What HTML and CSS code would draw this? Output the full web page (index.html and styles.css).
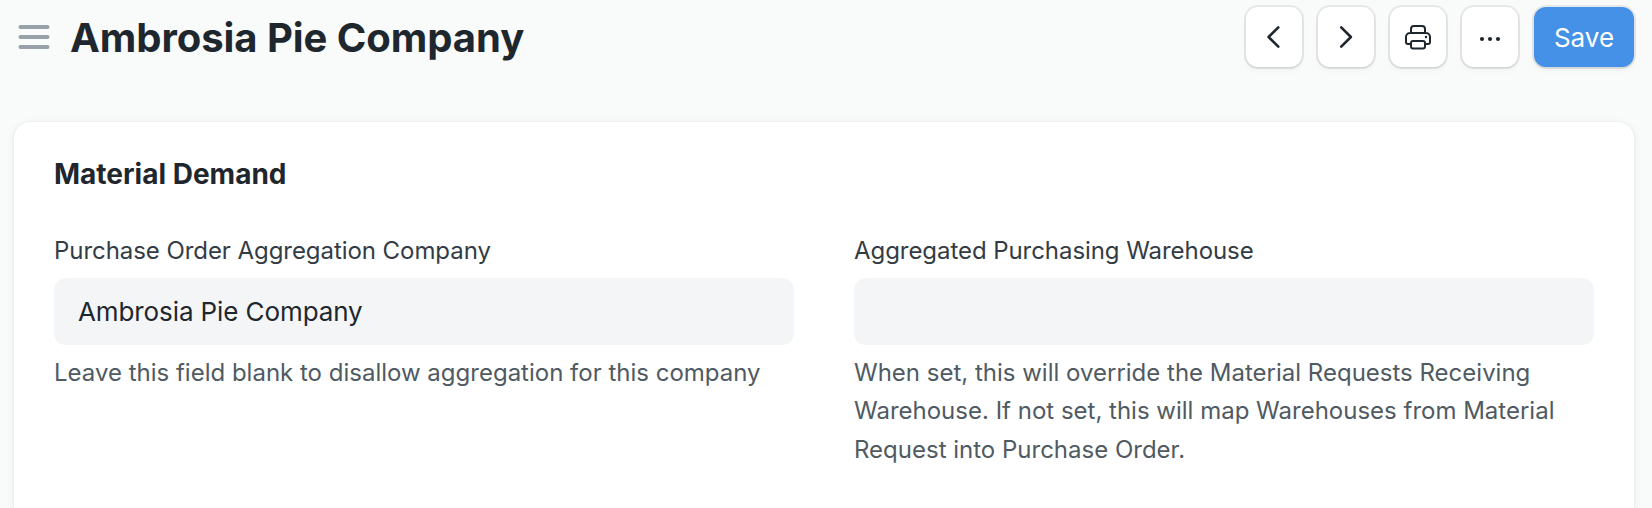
FILE: index.html
```html
<!DOCTYPE html>
<html lang="en">
<head>
<meta charset="utf-8">
<title>Ambrosia Pie Company</title>
<link rel="stylesheet" href="styles.css">
</head>
<body>
<header class="page-head">
  <svg class="menu-icon" viewBox="0 0 32 26"><path d="M2.500 3h27M2.500 13h27M2.500 23h27"/></svg>
  <h1 class="title">Ambrosia Pie Company</h1>
  <div class="actions">
    <button class="btn" aria-label="Previous"><svg class="icon" viewBox="0 0 32 32"><path d="M20.300 6.300 10.600 16l9.700 9.700"/></svg></button>
    <button class="btn" aria-label="Next"><svg class="icon" viewBox="0 0 32 32"><path d="m11.200 6.300 9.700 9.700-9.700 9.700"/></svg></button>
    <button class="btn" aria-label="Print"><svg class="icon icon-print" viewBox="0 0 32 32"><path d="M9 12V8a3 3 0 0 1 3-3h8a3 3 0 0 1 3 3v4M9 23H6a2 2 0 0 1-2-2v-5a4 4 0 0 1 4-4h16a4 4 0 0 1 4 4v5a2 2 0 0 1-2 2h-3"/><rect x="9" y="20" width="14" height="7.500" rx="2"/><circle class="dot" cx="24" cy="16" r="1.200"/></svg></button>
    <button class="btn" aria-label="More"><svg class="icon" viewBox="0 0 32 32"><g class="dot"><circle cx="8" cy="18" r="2.100"/><circle cx="16" cy="18" r="2.100"/><circle cx="24" cy="18" r="2.100"/></g></svg></button>
    <button class="btn btn-primary">Save</button>
  </div>
</header>
<main class="card">
  <h2 class="section-title">Material Demand</h2>
  <div class="columns">
    <div class="field">
      <label class="label">Purchase Order Aggregation Company</label>
      <div class="control">Ambrosia Pie Company</div>
      <p class="help">Leave this field blank to disallow aggregation for this company</p>
    </div>
    <div class="field">
      <label class="label">Aggregated Purchasing Warehouse</label>
      <div class="control"></div>
      <p class="help">When set, this will override the Material Requests Receiving Warehouse. If not set, this will map Warehouses from Material Request into Purchase Order.</p>
    </div>
  </div>
</main>
</body>
</html>
```
FILE: styles.css
```css
* { box-sizing: border-box; }
body {
  margin: 0;
  height: 508px;
  overflow: hidden;
  background: #f9fafa;
  color: #1f272e;
  font-family: Inter, sans-serif;
}
.page-head {
  display: flex;
  align-items: center;
  height: 74px;
  padding: 0 18px;
}
.menu-icon {
  width: 32px;
  height: 26px;
  fill: none;
  stroke: #98a1a9;
  stroke-width: 4;
  stroke-linecap: round;
}
.title {
  margin: 2px 0 0 20px;
  font-size: 40px;
  line-height: 48px;
  font-weight: 700;
  letter-spacing: -.05px;
}
.actions {
  display: flex;
  gap: 16px;
  margin-left: auto;
}
.btn {
  display: flex;
  align-items: center;
  justify-content: center;
  width: 56px;
  height: 60px;
  padding: 0;
  border: 0;
  border-radius: 12px;
  background: #fff;
  color: #1f272e;
  font: 400 26px/40px Inter, sans-serif;
  box-shadow: 0 0 0 2px rgba(0, 0, 0, .07), 0 1px 2px rgba(0, 0, 0, .08), 0 4px 6px rgba(0, 0, 0, .03);
}
.btn-primary {
  width: 100px;
  padding-top: 2px;
  background: #4491e7;
  color: #fff;
}
.icon {
  width: 32px;
  height: 32px;
  fill: none;
  stroke: currentColor;
  stroke-width: 2.600;
  stroke-linecap: round;
  stroke-linejoin: round;
}
.icon-print { stroke-width: 2; }
.dot { fill: currentColor; stroke: none; }
.card {
  height: 386px;
  margin: 48px 18px 0 14px;
  padding: 31px 40px 0;
  border-radius: 16px 16px 0 0;
  background: #fff;
  box-shadow: 0 0 2px rgba(25, 39, 52, .08), 0 2px 8px rgba(25, 39, 52, .08);
}
.section-title {
  margin: 0;
  font-size: 28px;
  line-height: 42px;
  font-weight: 700;
}
.columns {
  display: grid;
  grid-template-columns: 1fr 1fr;
  gap: 60px;
  margin-top: 37px;
}
.label {
  display: block;
  color: #333c44;
  font-size: 24px;
  line-height: 38px;
  letter-spacing: -.06px;
}
.control {
  height: 67px;
  margin-top: 8px;
  padding: 0 24px;
  border-radius: 12px;
  background: #f4f5f6;
  font-size: 26px;
  line-height: 67px;
  letter-spacing: -.1px;
}
.help {
  margin: 9px 0 0;
  color: #505a62;
  font-size: 24px;
  line-height: 38.4px;
}
```
